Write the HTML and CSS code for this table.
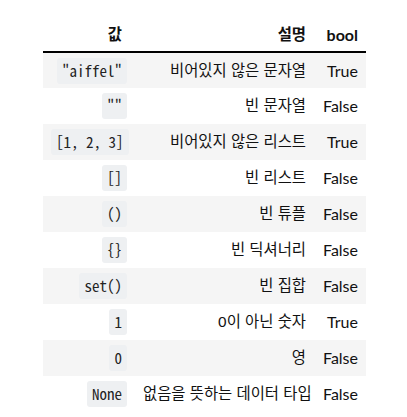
FILE: index.html
```html
<!DOCTYPE html>
<html lang="ko">
<head>
<meta charset="utf-8">
<link rel="stylesheet" href="styles.css">
</head>
<body>
<table class="tbl">
  <thead>
    <tr><th class="c1 ko">값</th><th class="c2 ko">설명</th><th class="c3">bool</th></tr>
  </thead>
  <tbody>
    <tr><td><code>"aiffel"</code></td><td class="ko">비어있지 않은 문자열</td><td>True</td></tr>
    <tr><td><code>""</code></td><td class="ko">빈 문자열</td><td>False</td></tr>
    <tr><td><code>[1, 2, 3]</code></td><td class="ko">비어있지 않은 리스트</td><td>True</td></tr>
    <tr><td><code>[]</code></td><td class="ko">빈 리스트</td><td>False</td></tr>
    <tr><td><code>()</code></td><td class="ko">빈 튜플</td><td>False</td></tr>
    <tr><td><code>{}</code></td><td class="ko">빈 딕셔너리</td><td>False</td></tr>
    <tr><td><code>set()</code></td><td class="ko">빈 집합</td><td>False</td></tr>
    <tr><td><code>1</code></td><td class="ko">0이 아닌 숫자</td><td>True</td></tr>
    <tr><td><code>0</code></td><td class="ko">영</td><td>False</td></tr>
    <tr><td><code>None</code></td><td class="ko">없음을 뜻하는 데이터 타입</td><td>False</td></tr>
  </tbody>
</table>
</body>
</html>
```
FILE: styles.css
```css
html, body {
  margin: 0;
  padding: 0;
  background: #fff;
}
body {
  font-family: "Liberation Sans", "Noto Sans CJK KR", sans-serif;
  font-size: 16px;
  color: #111;
}
.tbl {
  border-collapse: collapse;
  margin: 18px 0 0 43px;
  width: 323px;
  table-layout: fixed;
}
.tbl thead {
  border-bottom: 2px solid #000;
}
.tbl th {
  font-weight: bold;
  text-align: right;
  padding: 0 8px;
  line-height: 20px;
  height: 34px;
  box-sizing: border-box;
}
.tbl th.c1 {
  width: 92px;
  padding-right: 13px;
}
.tbl th.c2 {
  width: 179px;
}
.tbl th.c3 {
  width: 52px;
}
.tbl td {
  text-align: right;
  padding: 0 8px;
  line-height: 20px;
  height: 36px;
  box-sizing: border-box;
  white-space: nowrap;
}
.tbl .c3, .tbl td:last-child {
  font-family: "Lato", "Liberation Sans", sans-serif;
}
.tbl .ko {
  font-size: 15.4px;
}
.tbl tbody tr:nth-child(odd) {
  background: #f5f5f5;
}
.tbl code {
  font-family: "Noto Sans Mono CJK KR", "DejaVu Sans Mono", monospace;
  font-size: 15px;
  background: #eef0f2;
  border-radius: 3px;
  padding: 4px 5px;
  line-height: 18px;
  display: inline-block;
  vertical-align: middle;
  color: #222;
}
```
